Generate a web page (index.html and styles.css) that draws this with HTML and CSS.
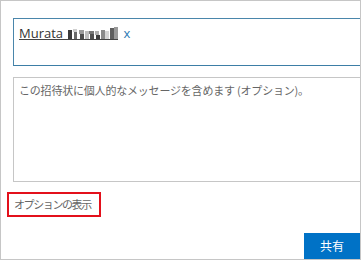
FILE: index.html
```html
<!DOCTYPE html>
<html lang="ja">
<head>
    <meta charset="UTF-8">
    <title>共有</title>
    <link rel="stylesheet" href="styles.css">
</head>
<body>
    <div class="frame">
        <div class="people-box">
            <span class="person">
                <span class="person-name">Murata <svg class="mosaic" width="53" height="14" viewBox="0 0 53 14">
                    <rect x="2" y="3" width="4" height="9" fill="#3a3a3a"/>
                    <rect x="7" y="2" width="4" height="3" fill="#cfcfcf"/>
                    <rect x="8" y="5" width="3" height="7" fill="#6a6a6a"/>
                    <rect x="13" y="3" width="5" height="4" fill="#9a9a9a"/>
                    <rect x="14" y="7" width="4" height="5" fill="#4c4c4c"/>
                    <rect x="19" y="4" width="4" height="8" fill="#bdbdbd"/>
                    <rect x="23" y="4" width="5" height="3" fill="#777"/>
                    <rect x="24" y="7" width="4" height="5" fill="#505050"/>
                    <rect x="29" y="4" width="4" height="4" fill="#b0b0b0"/>
                    <rect x="30" y="8" width="4" height="4" fill="#3e3e3e"/>
                    <rect x="35" y="3" width="4" height="9" fill="#8a8a8a"/>
                    <rect x="39" y="4" width="4" height="8" fill="#d4d4d4"/>
                    <rect x="44" y="1" width="4" height="11" fill="#5e5e5e"/>
                    <rect x="48" y="0" width="4" height="12" fill="#999"/>
                    <rect x="0" y="12" width="52" height="1" fill="#444"/>
                </svg></span>
                <span class="remove">x</span>
            </span>
        </div>
        <div class="message-box">この招待状に個人的なメッセージを含めます (オプション)。</div>
        <div class="options">
            <span class="options-link">オプションの表示</span>
        </div>
        <div class="actions">
            <span class="share-button">共有</span>
        </div>
    </div>
</body>
</html>
```

FILE: styles.css
```css
* {
    margin: 0;
    padding: 0;
    box-sizing: border-box;
}

body {
    background-color: #fff;
    font-family: "Open Sans", "Noto Sans CJK JP", sans-serif;
}

.frame {
    width: 361px;
    height: 260px;
    border: 1px solid #c6c6c6;
    padding: 17px 0 0 12px;
    display: flex;
    flex-direction: column;
    overflow: hidden;
}

.people-box {
    width: 370px;
    height: 48px;
    flex-shrink: 0;
    border: 1px solid #4a86ab;
    border-bottom-color: #3d7ea6;
    padding: 5px 5px;
}

.person {
    display: flex;
    align-items: baseline;
    gap: 4px;
    font-size: 13px;
    line-height: 18px;
}

.person-name {
    color: #333;
    text-decoration: underline;
    text-decoration-color: #444;
}

.mosaic {
    vertical-align: -3px;
}

.remove {
    color: #2b79b4;
    font-size: 13px;
}

.message-box {
    width: 370px;
    height: 105px;
    flex-shrink: 0;
    margin-top: 11px;
    border: 1px solid #c6c6c6;
    padding: 4px 5px;
    font-family: "Noto Sans CJK JP", sans-serif;
    font-size: 11px;
    letter-spacing: -0.2px;
    line-height: 16px;
    color: #666;
}

.options {
    margin-top: 10px;
    margin-left: -6px;
}

.options-link {
    display: inline-block;
    width: 94px;
    border: 2px solid #e3101b;
    padding: 2px 0 3px 5px;
    font-family: "Noto Sans CJK JP", sans-serif;
    font-size: 11px;
    letter-spacing: -1.4px;
    line-height: 16px;
    color: #666;
}

.actions {
    margin-top: auto;
    display: flex;
    justify-content: flex-end;
}

.share-button {
    width: 56px;
    height: 26px;
    background-color: #0072c6;
    color: #fff;
    font-family: "Noto Sans CJK JP", sans-serif;
    font-size: 12px;
    line-height: 26px;
    text-align: center;
}
```
